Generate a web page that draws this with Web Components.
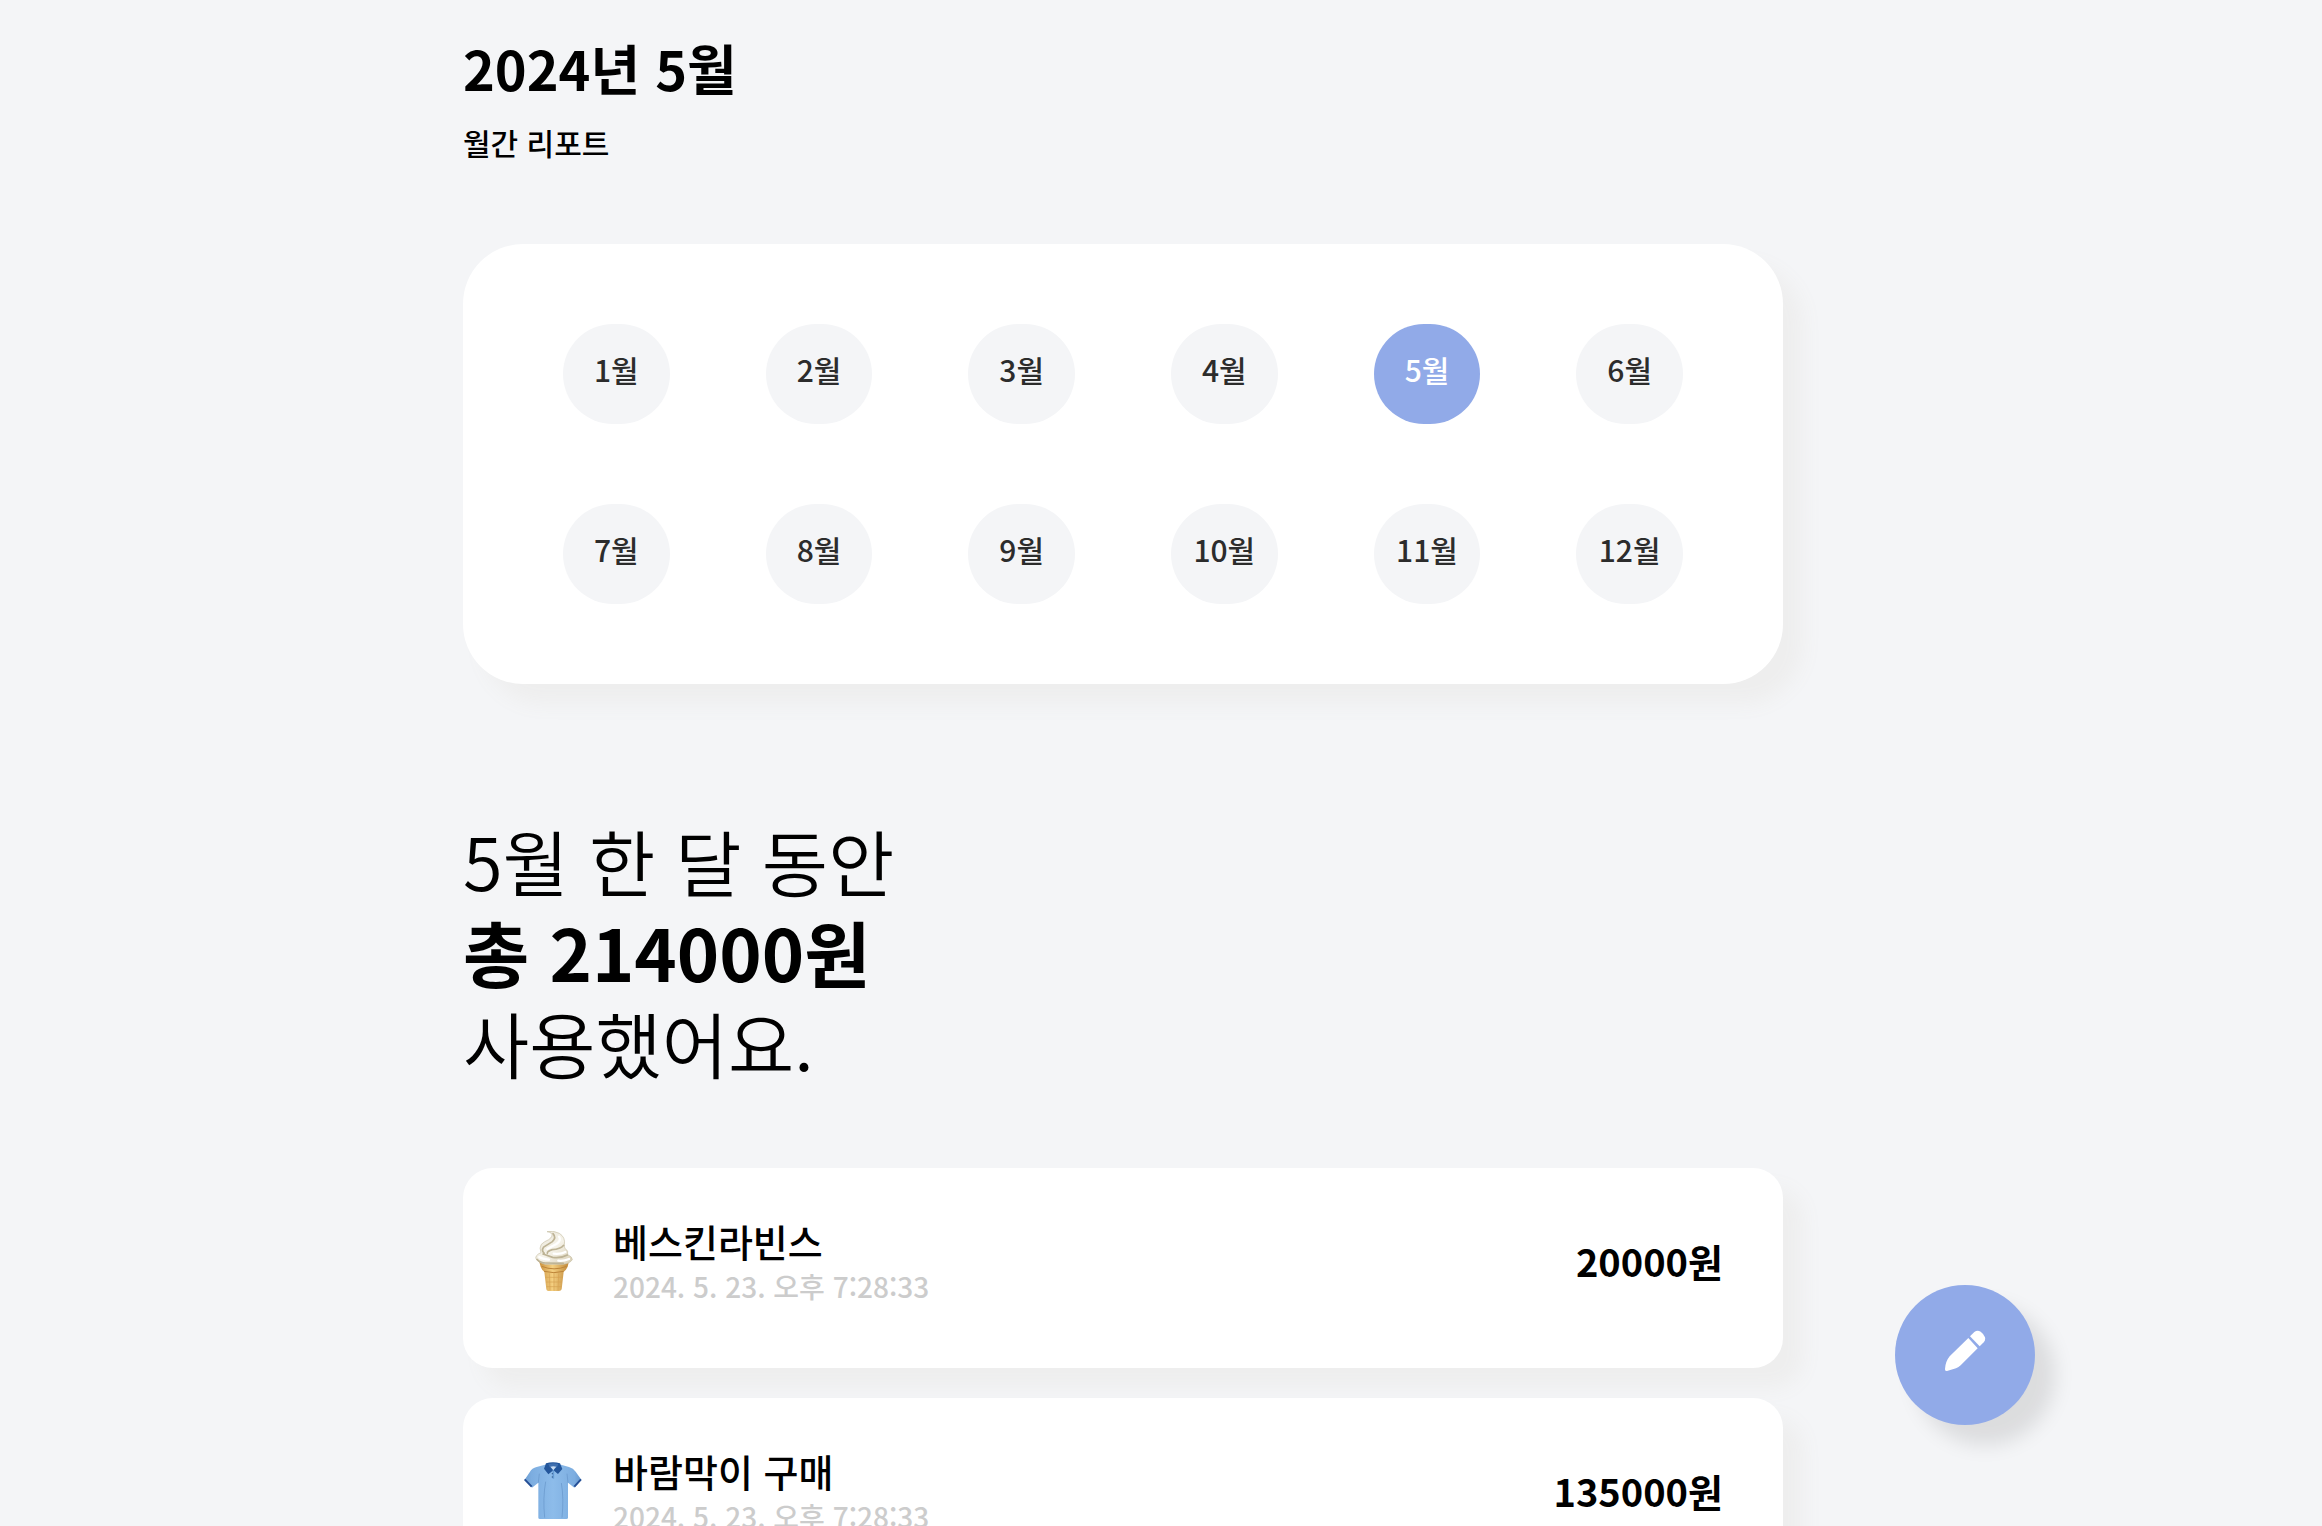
<!DOCTYPE html>
<html lang="ko">
<head>
<meta charset="utf-8">
<meta name="viewport" content="width=device-width, initial-scale=1">
<title>월간 리포트</title>
<style>
  body {
    margin: 0;
    background: #f4f5f7;
    color: #000;
    font-family: "Noto Sans CJK KR", sans-serif;
  }
</style>
</head>
<body>
<report-page></report-page>

<script>
/* ---------- month picker ---------- */
class MonthPicker extends HTMLElement {
  constructor() {
    super();
    this.attachShadow({ mode: 'open' });
  }

  connectedCallback() {
    this.render();
    this.bindEvents();
  }

  render() {
    const selected = Number(this.getAttribute('selected'));
    const buttons = Array.from({ length: 12 }, (_, i) => i + 1)
      .map((m) => `<button type="button" aria-pressed="${m === selected}">${m}월</button>`)
      .join('');

    this.shadowRoot.innerHTML = `
<style>
  :host {
    display: grid;
    grid-template-columns: repeat(6, 1fr);
    gap: 80px 96px;
    padding: 80px 100px;
    border-radius: 60px;
    background: #fff;
    box-shadow: 20px 20px 20px #eee;
  }
  button {
    height: 100px;
    padding: 0 0 10px;
    border: 0;
    border-radius: 50px;
    background: #f4f5f7;
    color: #2c2c2c;
    font: inherit;
    font-size: 30px;
    font-weight: 500;
    white-space: nowrap;
    cursor: pointer;
  }
  button[aria-pressed="true"] {
    background: #91aae8;
    color: #fff;
  }
</style>
${buttons}
    `;
  }

  bindEvents() {
    const buttons = this.shadowRoot.querySelectorAll('button');
    buttons.forEach((button) => {
      button.addEventListener('click', () => {
        buttons.forEach((b) => b.setAttribute('aria-pressed', b === button));
      });
    });
  }
}

/* ---------- one expense row ---------- */
class ExpenseItem extends HTMLElement {
  constructor() {
    super();
    this.attachShadow({ mode: 'open' });
  }

  connectedCallback() {
    this.shadowRoot.innerHTML = `
<style>
  :host {
    display: flex;
    align-items: center;
    gap: 30px;
    padding: 48px 60px 62px;
    border-radius: 30px;
    background: #fff;
    box-shadow: 20px 20px 20px #eee;
  }
  ::slotted(svg) {
    flex: none;
    width: 60px;
    height: 60px;
  }
  .info { flex: 1; }
  .name {
    font-size: 38px;
    line-height: 50px;
    font-weight: 500;
  }
  .date {
    color: #ccc;
    font-size: 28px;
    line-height: 40px;
    font-weight: 500;
  }
  .amount {
    font-size: 38px;
    line-height: 50px;
    font-weight: 700;
  }
</style>
<slot></slot>
<div class="info">
  <div class="name">${this.getAttribute('name')}</div>
  <div class="date">${this.getAttribute('date')}</div>
</div>
<div class="amount">${this.getAttribute('amount')}원</div>
    `;
  }
}

/* ---------- floating write button ---------- */
class WriteButton extends HTMLElement {
  constructor() {
    super();
    this.attachShadow({ mode: 'open' });
  }

  connectedCallback() {
    this.shadowRoot.innerHTML = `
<style>
  :host {
    position: fixed;
    right: 287px;
    bottom: 101px;
  }
  button {
    display: flex;
    align-items: center;
    justify-content: center;
    width: 140px;
    height: 140px;
    padding: 0;
    border: 0;
    border-radius: 50%;
    background: #91aae8;
    box-shadow: 20px 20px 20px rgba(0, 0, 0, .1);
    cursor: pointer;
  }
  svg { width: 50px; height: 50px; }
</style>
<button type="button" aria-label="작성">
  <svg viewBox="210 210 150 150" fill="#fff" aria-hidden="true">
    <path d="M295 234 323 265 272 316Q266 322 258 325L231 333Q224 334 225 327 226 305 239 289Z"/>
    <path d="M300 229 313 216Q322 209 332 215 342 222 345 232 347 240 341 247L329 259Z"/>
  </svg>
</button>
    `;
  }
}

/* ---------- page ---------- */
class ReportPage extends HTMLElement {
  constructor() {
    super();
    this.attachShadow({ mode: 'open' });
  }

  connectedCallback() {
    this.shadowRoot.innerHTML = `
<style>
  :host {
    display: grid;
    grid-template-columns: 463fr 1320fr 539fr;
    height: 100vh;
    overflow: hidden;
  }
  main { grid-column: 2; min-width: 0; }
  h1, h2, p { margin: 0; }
  h1 {
    padding-top: 28px;
    font-size: 54px;
    line-height: 80px;
    font-weight: 700;
  }
  .sub {
    margin-top: 14px;
    font-size: 30px;
    line-height: 40px;
    font-weight: 500;
  }
  month-picker { margin-top: 82px; }
  h2 {
    margin-top: 130px;
    font-size: 72px;
    line-height: 91px;
    font-weight: 350;
  }
  h2 strong {
    display: block;
    font-weight: 700;
  }
  .list {
    display: grid;
    gap: 30px;
    margin-top: 81px;
  }
</style>
<main>
  <h1>2024년 5월</h1>
  <p class="sub">월간 리포트</p>
  <month-picker selected="5"></month-picker>
  <h2>5월 한 달 동안<strong>총 214000원</strong>사용했어요.</h2>
  <div class="list">
    <expense-item name="베스킨라빈스" date="2024. 5. 23. 오후 7:28:33" amount="20000">
      <svg viewBox="39 69 180 180" aria-hidden="true">
        <defs>
          <linearGradient id="cone" x2="1" y2="0">
            <stop offset="0" stop-color="#c98f3c"/>
            <stop offset=".45" stop-color="#f4cf80"/>
            <stop offset="1" stop-color="#c08839"/>
          </linearGradient>
          <linearGradient id="cream" x2="1" y2="1">
            <stop offset="0" stop-color="#e6e2d3"/>
            <stop offset=".5" stop-color="#f6f3ea"/>
            <stop offset="1" stop-color="#d6ccb0"/>
          </linearGradient>
        </defs>
        <path fill="url(#cone)" d="M87 158H177L173 176Q168 187 161 191L155 244Q153 249 147 249H115Q110 249 109 244L103 191Q96 187 92 176Z"/>
        <path stroke="#bd8438" stroke-width="3" fill="none" d="M95 175Q132 190 170 175M102 190Q132 198 161 190"/>
        <path stroke="#d4a152" stroke-width="2" fill="none" d="M106 208H158M108 222H156M110 236H154M118 196 120 247M132 196V248M146 196 144 247"/>
        <path fill="url(#cream)" stroke="#c9c1a8" stroke-width="2" d="M111 71Q128 66 148 76 167 88 163 110 162 118 166 122 176 128 173 140 187 146 187 155 180 166 160 169H105Q83 162 77 151 77 143 85 138L93 134Q87 119 94 109 102 101 116 95 132 84 123 75 118 72 111 71Z"/>
        <path stroke="#bdb395" stroke-width="5" stroke-linecap="round" fill="none" d="M129 77Q140 89 127 101L101 117Q93 128 103 136M161 112Q151 124 127 125 111 130 112 136M172 141Q155 151 128 148L99 138M81 154Q91 165 107 165L160 166"/>
        <path stroke="#fff" stroke-width="7" stroke-linecap="round" fill="none" d="M147 86Q155 97 139 108L112 122M166 132Q154 139 131 137M177 153Q160 160 145 158M88 147Q97 153 117 155"/>
      </svg>
    </expense-item>
    <expense-item name="바람막이 구매" date="2024. 5. 23. 오후 7:28:33" amount="135000">
      <svg viewBox="39 69 180 180" aria-hidden="true">
        <defs>
          <linearGradient id="shirt" x2="1" y2="0">
            <stop offset="0" stop-color="#6f9fd3"/>
            <stop offset=".12" stop-color="#7cade0"/>
            <stop offset=".5" stop-color="#8dbcea"/>
            <stop offset=".88" stop-color="#7cade0"/>
            <stop offset="1" stop-color="#6797cd"/>
          </linearGradient>
        </defs>
        <path fill="url(#shirt)" d="M105 80 80 87Q66 90 59 103L44 125 66 149 85 134V239Q85 243 90 243H169Q174 243 174 239V134L193 149 214 125 197 101Q190 90 177 87L153 80Z"/>
        <path stroke="#6594c9" stroke-width="2" fill="none" d="M85 134 88 107M174 134 171 107M107 131Q98 180 104 239M154 135Q162 180 156 239"/>
        <path stroke="#254f96" stroke-width="6" fill="none" d="M44 124 65 146M213 124 193 146"/>
        <path fill="#23569b" d="M108 76Q129 69 150 76L157 93 144 108 130 97 115 109 102 92Z"/>
        <path fill="#3f6fae" d="M115 78Q130 74 145 78L141 88H119Z"/>
        <path fill="#c8dcf1" d="M121 86Q130 83 139 86L130 97Z"/>
        <path stroke="#649bd5" stroke-width="5" d="M130 97V122"/>
        <circle cx="127" cy="107" r="2" fill="#315b8e"/>
        <circle cx="127" cy="117" r="2" fill="#315b8e"/>
      </svg>
    </expense-item>
  </div>
</main>
<write-button></write-button>
    `;
  }
}

customElements.define('month-picker', MonthPicker);
customElements.define('expense-item', ExpenseItem);
customElements.define('write-button', WriteButton);
customElements.define('report-page', ReportPage);
</script>
</body>
</html>
